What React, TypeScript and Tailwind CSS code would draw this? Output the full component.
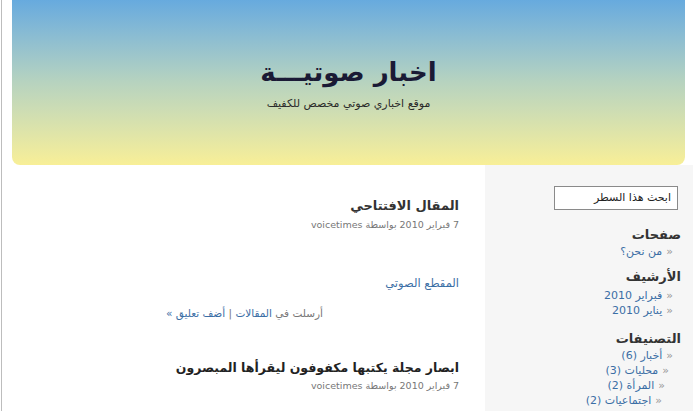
const ar = "font-['DejaVu_Sans',sans-serif]";

function SidebarHeading({ children }: { children: string }) {
  return <h2 className="text-[13px] font-bold text-[#333] leading-[18px] pr-[13px]">{children}</h2>;
}

function SidebarLink({ children, indent = 0 }: { children: string; indent?: number }) {
  const pad = ['pr-[21px]', 'pr-[25px]', 'pr-[29px]', 'pr-[32px]'][indent];
  return (
    <li className={`text-[11px] leading-[15px] text-[#3b6ea5] ${pad}`}>
      <span className="text-[#999] ml-[4px]">«</span>
      {children}
    </li>
  );
}

export default function App() {
  return (
    <div dir="rtl" className={`w-[693px] h-[411px] overflow-hidden bg-white border-l border-[#bdbdbd] ml-[1px] ${ar}`}>
      <header className="ml-[10px] mr-[9px] h-[165px] rounded-b-[8px] bg-gradient-to-b from-[#67aade] via-[#b7d3bf] to-[#f8ef97] flex flex-col items-center pt-[54px]">
        <h1 className="text-[26px] leading-[36px] font-bold text-[#1a1a35] tracking-[-1px]">اخبار صوتيـــة</h1>
        <p className="text-[11px] leading-[16px] text-[#2a2a2a] mt-[6px]">موقع اخباري صوتي مخصص للكفيف</p>
      </header>

      <div className="flex h-[246px]">
        <aside className="w-[209px] bg-[#f6f6f6] pt-[19px]">
          <div className="pr-[16px]">
            <input
              dir="rtl"
              defaultValue="ابحث هذا السطر"
              className={`w-[124px] h-[24px] border border-[#8a8a8a] bg-white px-[6px] text-[11px] text-[#222] outline-none ${ar}`}
            />
          </div>

          <div className="mt-[16px]">
            <SidebarHeading>صفحات</SidebarHeading>
            <ul className="mt-[0px]">
              <SidebarLink>من نحن؟</SidebarLink>
            </ul>
          </div>

          <div className="mt-[9px]">
            <SidebarHeading>الأرشيف</SidebarHeading>
            <ul className="mt-[2px]">
              <SidebarLink>فبراير 2010</SidebarLink>
              <SidebarLink>يناير 2010</SidebarLink>
            </ul>
          </div>

          <div className="mt-[12px]">
            <SidebarHeading>التصنيفات</SidebarHeading>
            <ul className="mt-[0px]">
              <SidebarLink>أخبار (6)</SidebarLink>
              <SidebarLink indent={1}>محليات (3)</SidebarLink>
              <SidebarLink indent={2}>المرأة (2)</SidebarLink>
              <SidebarLink indent={3}>اجتماعيات (2)</SidebarLink>
            </ul>
          </div>
        </aside>

        <main className="flex-1 pr-[26px] pl-[10px] pt-[31px]">
          <article>
            <h2 className="text-[13px] leading-[20px] font-bold text-[#333]">المقال الافتتاحي</h2>
            <p className="text-[9.5px] leading-[14px] text-[#777] mt-[2px]">7 فبراير 2010 بواسطة voicetimes</p>
            <p className="text-[11.5px] leading-[16px] text-[#3b6ea5] mt-[43px]">المقطع الصوتي</p>
            <p className="text-[10.5px] leading-[14px] text-[#777] mt-[15px] pr-[136px]">
              أرسلت في <span className="text-[#3b6ea5]">المقالات</span> | <span className="text-[#3b6ea5]">أضف تعليق »</span>
            </p>
          </article>

          <article className="mt-[38px]">
            <h2 className="text-[12.5px] leading-[20px] font-bold text-[#222]">ابصار مجلة يكتبها مكفوفون ليقرأها المبصرون</h2>
            <p className="text-[9.5px] leading-[14px] text-[#777] mt-[1px]">7 فبراير 2010 بواسطة voicetimes</p>
          </article>
        </main>
      </div>
    </div>
  );
}
